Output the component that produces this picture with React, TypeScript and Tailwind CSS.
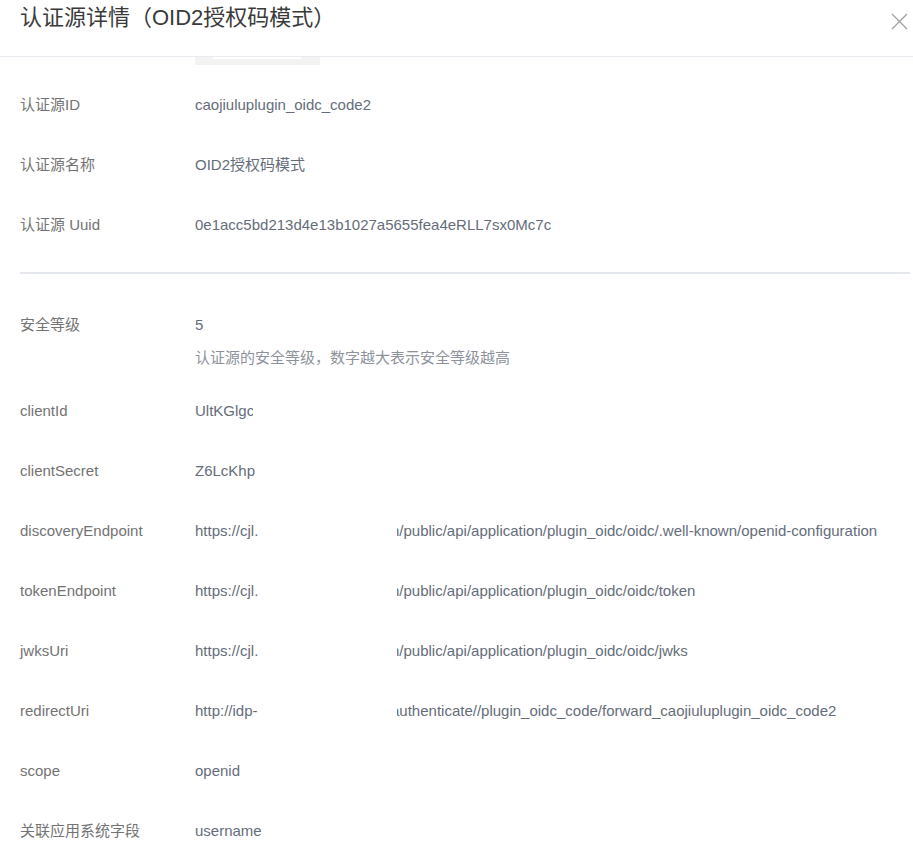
import React from "react";

const font = {
  fontFamily: '"Liberation Sans", Arial, "Noto Sans CJK SC", sans-serif',
};

type Row = {
  label: string;
  value?: string;
  head?: string;
  tail?: string;
  clip?: number;
};

const basicRows: Row[] = [
  { label: "认证源ID", value: "caojiuluplugin_oidc_code2" },
  { label: "认证源名称", value: "OID2授权码模式" },
  { label: "认证源 Uuid", value: "0e1acc5bd213d4e13b1027a5655fea4eRLL7sx0Mc7c" },
];

const configRows: Row[] = [
  { label: "clientId", value: "UltKGlgc", clip: 58 },
  { label: "clientSecret", value: "Z6LcKhp", clip: 60 },
  {
    label: "discoveryEndpoint",
    head: "https://cjl.",
    tail: "n/public/api/application/plugin_oidc/oidc/.well-known/openid-configuration",
  },
  {
    label: "tokenEndpoint",
    head: "https://cjl.",
    tail: "n/public/api/application/plugin_oidc/oidc/token",
  },
  {
    label: "jwksUri",
    head: "https://cjl.",
    tail: "n/public/api/application/plugin_oidc/oidc/jwks",
  },
  {
    label: "redirectUri",
    head: "http://idp-",
    tail: "authenticate//plugin_oidc_code/forward_caojiuluplugin_oidc_code2",
  },
  { label: "scope", value: "openid" },
  { label: "关联应用系统字段", value: "username" },
];

function InfoRow({ row }: { row: Row }) {
  return (
    <div className="flex h-[60px] items-center text-[15px] leading-[20px]">
      <div className="w-[195px] shrink-0 pl-[20px] text-[#737373]">{row.label}</div>
      <div className="flex min-w-0 whitespace-nowrap text-[#656d7a]">
        {row.head !== undefined ? (
          <>
            <span className="w-[202px] shrink-0">{row.head}</span>
            <span className="overflow-hidden">
              <span className="-ml-[6px] block">{row.tail}</span>
            </span>
          </>
        ) : row.clip ? (
          <span className="overflow-hidden" style={{ width: row.clip }}>
            {row.value}
          </span>
        ) : (
          <span>{row.value}</span>
        )}
      </div>
    </div>
  );
}

export default function App() {
  return (
    <div className="h-[859px] w-[913px] overflow-hidden bg-white" style={font}>
      {/* header */}
      <div className="flex h-[57px] items-start justify-between border-b border-[#e8ecf0] pl-[20px] pr-[5px]">
        <h2 className="pt-[3px] text-[22px] leading-[30px] font-normal text-[#3a3a3a]">
          认证源详情（OID2授权码模式）
        </h2>
        <button className="mt-[12px] flex h-[18px] w-[18px] items-center justify-center text-[#a0a0a0]">
          <svg width="17" height="17" viewBox="0 0 17 17" fill="none" stroke="currentColor" strokeWidth="1.3">
            <path d="M1 1L16 16M16 1L1 16" />
          </svg>
        </button>
      </div>

      {/* scrolled-off image bottom */}
      <div className="ml-[195px] h-[8px] w-[125px] bg-[#f3f3f3]">
        <div className="ml-[18px] h-[2px] w-[88px] bg-white" />
      </div>

      <div className="mt-[10px]">
        {basicRows.map((r) => (
          <InfoRow key={r.label} row={r} />
        ))}
      </div>

      <div className="ml-[20px] mr-[3px] mt-[17px] h-[2px] bg-[#e4e8ec]" />

      {/* security level */}
      <div className="mt-[41px] mb-[13px] flex text-[15px] leading-[20px]">
        <div className="w-[195px] shrink-0 pl-[20px] text-[#737373]">安全等级</div>
        <div>
          <div className="text-[#656d7a]">5</div>
          <div className="mt-[13px] text-[#8e939b]">
            认证源的安全等级，数字越大表示安全等级越高
          </div>
        </div>
      </div>

      <div>
        {configRows.map((r) => (
          <InfoRow key={r.label} row={r} />
        ))}
      </div>
    </div>
  );
}
